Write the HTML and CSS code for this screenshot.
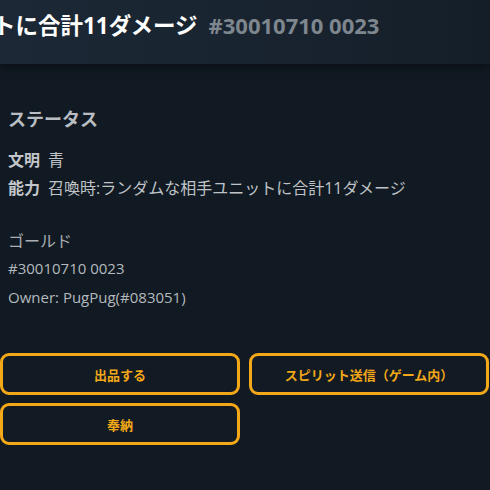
FILE: index.html
```html
<!DOCTYPE html>
<html lang="ja">
<head>
<meta charset="utf-8">
<link rel="stylesheet" href="styles.css">
</head>
<body>
<header class="hero">
  <h1 class="title"><span class="name">召喚時:ランダムな相手ユニットに合計11ダメージ</span><span class="serial">#30010710 0023</span></h1>
</header>
<main class="content">
  <section class="status">
    <h2 class="section-title">ステータス</h2>
    <div class="row"><span class="label">文明</span><span class="value">青</span></div>
    <div class="row"><span class="label">能力</span><span class="value">召喚時:ランダムな相手ユニットに合計11ダメージ</span></div>
  </section>
  <section class="meta">
    <div class="rarity">ゴールド</div>
    <div class="line">#30010710 0023</div>
    <div class="line">Owner: PugPug(#083051)</div>
  </section>
  <div class="actions">
    <button class="btn">出品する</button>
    <button class="btn">スピリット送信（ゲーム内）</button>
    <button class="btn">奉納</button>
  </div>
</main>
</body>
</html>
```

FILE: styles.css
```css
html, body {
  margin: 0;
  padding: 0;
  background: #111a22;
  overflow: hidden;
}
body {
  font-family: "Open Sans", "Noto Sans CJK JP", sans-serif;
  color: #c5c9cd;
  width: 490px;
  height: 490px;
}
.hero {
  height: 64px;
  background: linear-gradient(90deg, #1c2835 0%, #18232f 60%, #151e28 100%);
  box-shadow: 0 4px 8px rgba(0,0,0,0.35);
  overflow: hidden;
}
.title {
  margin: 0 0 0 -306px;
  padding-top: 8px;
  white-space: nowrap;
  font-size: 22.5px;
  font-weight: 700;
  line-height: 34px;
  color: #ffffff;
  display: flex;
  align-items: baseline;
  gap: 11px;
}
.serial {
  font-size: 22px;
  color: #7e868e;
  font-weight: 700;
}
.content {
  padding: 42px 0 0 0;
}
.status, .meta {
  padding-left: 8px;
}
.section-title {
  margin: 0 0 14px;
  font-size: 18px;
  font-weight: 700;
  line-height: 26px;
  color: #b9bdc2;
}
.row {
  display: flex;
  gap: 8px;
  font-size: 16px;
  line-height: 28px;
}
.label {
  font-weight: 700;
  color: #c2c6ca;
}
.value {
  color: #bfc3c7;
}
.meta {
  margin-top: 26px;
}
.rarity {
  font-size: 16px;
  line-height: 26px;
  color: #a9aeb3;
}
.line {
  font-size: 15px;
  line-height: 29px;
  color: #b4b9be;
}
.actions {
  margin-top: 41px;
  display: grid;
  grid-template-columns: 240px 240px;
  column-gap: 9px;
  row-gap: 8px;
}
.btn {
  height: 42px;
  border: 3px solid #f2a818;
  border-radius: 9px;
  background: #121a23;
  color: #f2a818;
  font-family: "Open Sans", "Noto Sans CJK JP", sans-serif;
  font-size: 13px;
  font-weight: 700;
  padding: 0;
}
```
